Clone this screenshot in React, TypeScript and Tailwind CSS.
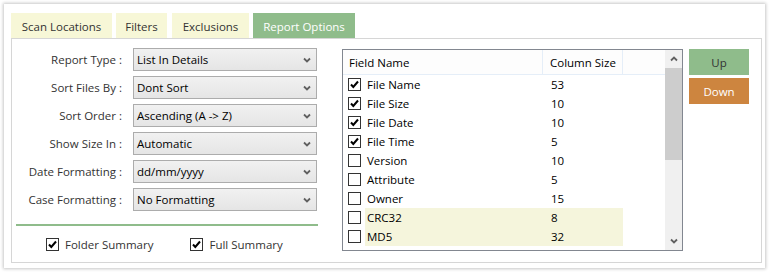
import React from 'react'

const font = { fontFamily: '"Open Sans", "Noto Sans", sans-serif' }

const tabs = [
  { label: 'Scan Locations', w: 'w-[101px]', active: false },
  { label: 'Filters', w: 'w-[51px]', active: false },
  { label: 'Exclusions', w: 'w-[77px]', active: false },
  { label: 'Report Options', w: 'w-[102px]', active: true },
]

const options = [
  { label: 'Report Type :', value: 'List In Details' },
  { label: 'Sort Files By :', value: 'Dont Sort' },
  { label: 'Sort Order :', value: 'Ascending (A -> Z)' },
  { label: 'Show Size In :', value: 'Automatic' },
  { label: 'Date Formatting :', value: 'dd/mm/yyyy' },
  { label: 'Case Formatting :', value: 'No Formatting' },
]

const fields = [
  { name: 'File Name', size: '53', checked: true, hl: false },
  { name: 'File Size', size: '10', checked: true, hl: false },
  { name: 'File Date', size: '10', checked: true, hl: false },
  { name: 'File Time', size: '5', checked: true, hl: false },
  { name: 'Version', size: '10', checked: false, hl: false },
  { name: 'Attribute', size: '5', checked: false, hl: false },
  { name: 'Owner', size: '15', checked: false, hl: false },
  { name: 'CRC32', size: '8', checked: false, hl: true },
  { name: 'MD5', size: '32', checked: false, hl: true },
]

const Chevron = ({ up = false }: { up?: boolean }) => (
  <svg width="8" height="6" viewBox="0 0 8 6" className={up ? 'rotate-180' : ''}>
    <path d="M1 1.5 L4 4.5 L7 1.5" fill="none" stroke="#606060" strokeWidth="1.8" />
  </svg>
)

const CheckBox = ({ checked }: { checked: boolean }) => (
  <div className="w-[13px] h-[13px] border border-[#333] bg-white flex items-center justify-center shrink-0">
    {checked && (
      <svg width="11" height="11" viewBox="0 0 11 11">
        <path d="M2 5.5 L4.3 8 L9 2.5" fill="none" stroke="#000" strokeWidth="2" />
      </svg>
    )}
  </div>
)

export default function App() {
  return (
    <div className="w-[772px] h-[275px] bg-white pt-[4px] pl-[4px] text-[11.5px]" style={font}>
      <div className="w-[761px] h-[264px] bg-white shadow-[0_0_3px_1px_rgba(0,0,0,0.22)] pl-[7px] pt-[9px]">
        <div className="flex gap-[4px] h-[25px]">
          {tabs.map((t, i) => (
            <div
              key={t.label}
              className={`${t.w} ${i === 2 ? 'ml-[1px]' : ''} flex items-center justify-center pt-[2px] ${
                t.active ? 'bg-[#8fbc8b] text-white' : 'bg-[#f7f7d7] text-[#333]'
              }`}
            >
              {t.label}
            </div>
          ))}
        </div>
        <div className="w-[751px] h-[225px] border border-[#d6d6d6] flex">
          <div className="w-[309px] pl-[4px] pt-[9px]">
            <div className="flex flex-col gap-[5px]">
              {options.map((o) => (
                <div key={o.label} className="flex items-center h-[23px]">
                  <div className="w-[107px] text-right text-[#333] pr-[1px] pt-[1px]">{o.label}</div>
                  <div className="ml-[10px] w-[184px] h-[23px] border border-[#acacac] bg-gradient-to-b from-[#f1f1f1] to-[#e5e5e5] flex items-center justify-between pl-[3px] pr-[5px] text-black">
                    <span className="pt-[1px]">{o.value}</span>
                    <Chevron />
                  </div>
                </div>
              ))}
            </div>
            <div className="mt-[13px] w-[302px] h-[2px] bg-[#8fbc8b]" />
            <div className="flex items-center mt-[10px] h-[16px] text-[#333]">
              <div className="ml-[30px] flex items-center gap-[6px]">
                <CheckBox checked />
                <span className="pt-[1px]">Folder Summary</span>
              </div>
              <div className="ml-[37px] flex items-center gap-[6px]">
                <CheckBox checked />
                <span className="pt-[1px]">Full Summary</span>
              </div>
            </div>
          </div>
          <div className="ml-[21px] mt-[10px] w-[341px] h-[202px] border border-[#828790] flex bg-white">
            <div className="w-[322px] flex flex-col text-black">
              <div className="h-[25px] flex bg-[#fdfdfd] border-b border-[#e5eef8] shrink-0">
                <div className="w-[200px] border-r border-[#e5eef8] flex items-center pl-[6px] pt-[1px]">Field Name</div>
                <div className="w-[80px] border-r border-[#e5eef8] flex items-center pl-[7px] pt-[1px]">Column Size</div>
              </div>
              {fields.map((f) => (
                <div key={f.name} className="h-[19px] flex items-center">
                  <div className="w-[22px] pl-[5px] flex items-center">
                    <CheckBox checked={f.checked} />
                  </div>
                  <div className={`w-[258px] h-full flex items-center pt-[1px] ${f.hl ? 'bg-[#f5f5dc]' : ''}`}>
                    <span className="w-[184px] pl-[2px]">{f.name}</span>
                    <span className="pl-[2px]">{f.size}</span>
                  </div>
                </div>
              ))}
            </div>
            <div className="w-[17px] bg-[#f0f0f0] flex flex-col">
              <div className="h-[18px] flex items-center justify-center">
                <Chevron up />
              </div>
              <div className="h-[92px] bg-[#cdcdcd]" />
              <div className="flex-1" />
              <div className="h-[18px] flex items-center justify-center">
                <Chevron />
              </div>
            </div>
          </div>
          <div className="ml-[6px] mt-[10px] flex flex-col gap-[3px]">
            <div className="w-[60px] h-[26px] bg-[#8fbc8b] text-[#333] flex items-center justify-center pt-[1px]">Up</div>
            <div className="w-[60px] h-[26px] bg-[#cd853f] text-white flex items-center justify-center pt-[1px]">Down</div>
          </div>
        </div>
      </div>
    </div>
  )
}
